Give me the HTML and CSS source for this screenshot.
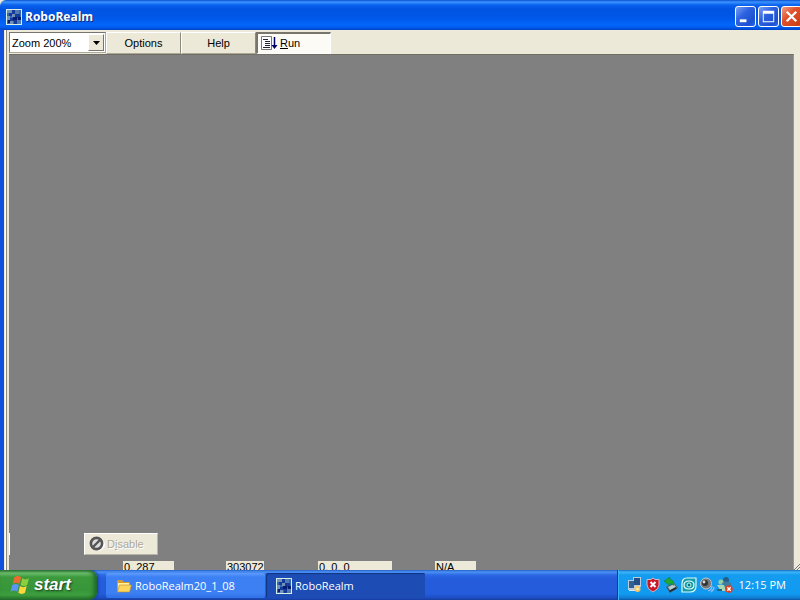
FILE: index.html
```html
<!DOCTYPE html>
<html lang="en">
<head>
<meta charset="utf-8">
<title>RoboRealm</title>
<link rel="stylesheet" href="styles.css">
</head>
<body>
<svg width="0" height="0" class="defs" aria-hidden="true">
  <symbol id="app" viewBox="0 0 16 16">
    <path fill="#d4f0e8" d="M0 0h16v16H0z"/><path fill="#3464b4" d="M1 1h14v14H1z"/>
    <path fill="#7492b4" d="M1 1h5v3H1zM1 7h3v4H1zM6 5h3v3H6zM4 12h3v3H4z"/>
    <path fill="#5478b0" d="M9 1h4v4H9zM11 11h4v4h-4z"/>
    <path fill="#123b9c" d="M6 1h3v4H6zM3 4h3v3H3zM9 5h5v4H9zM4 9h4v3H4zM8 11h3v4H8z"/>
    <path fill="#071c70" d="M7 8h4v3H7zM12 8h3v3h-3zM2 11h2v3H2z"/>
  </symbol>
</svg>
<header class="titlebar">
  <svg class="icon" aria-hidden="true"><use href="#app"/></svg>
  <h1>RoboRealm</h1>
  <div class="controls">
    <button class="ctl" aria-label="Minimize"><svg viewBox="0 0 20 20"><path fill="#fff" d="M4 13h7v3H4z"/></svg></button>
    <button class="ctl" aria-label="Maximize"><svg viewBox="0 0 20 20"><path fill="#fff" fill-rule="evenodd" d="M4 4h12v12H4zM5 7v8h10V7z"/></svg></button>
    <button class="ctl close" aria-label="Close"><svg viewBox="0 0 20 20"><path stroke="#fff" stroke-width="2.4" d="M5 5l10 10M15 5L5 15"/></svg></button>
  </div>
</header>
<main class="window">
  <div class="toolbar">
    <div class="zoom">
      <select aria-label="Zoom"><option>Zoom 200%</option></select>
      <span class="arrow"><svg viewBox="0 0 7 4"><path d="M0 0h7L3.500 4z"/></svg></span>
    </div>
    <button class="tool">Options</button>
    <button class="tool">Help</button>
    <button class="tool run"><svg viewBox="0 0 17 15"><path fill="#fff" stroke="#777" d="M.5.5h10v13H.5z"/><path stroke="#223" d="M2 3.500h5M4 5.500h5M4 7.500h5M4 9.500h5M2 11.500h7"/><path stroke="#006" stroke-width="1.500" d="M13.500 1v9"/><path fill="#006" d="M10.500 9h6l-3 4z"/></svg><span><u>R</u>un</span></button>
  </div>
  <section class="canvas">
    <div class="actions">
      <button class="disable" disabled><svg viewBox="0 0 16 16"><path fill="#fff" d="M9 2a7 7 0 017 7 7 7 0 01-7 6z"/><circle cx="7.500" cy="7.500" r="5.600" fill="#ddd" stroke="#555" stroke-width="2.600"/><path stroke="#555" stroke-width="2.400" d="M4 11l7-7"/></svg><span>D<u>i</u>sable</span></button>
    </div>
    <div class="status">
      <output>0, 287</output><output>303072</output><output>0, 0, 0</output><output>N/A</output>
    </div>
  </section>
  <svg class="grip" viewBox="0 0 6 6" aria-hidden="true"><path stroke="#777" d="M0 6l6-6M3 6l3-3"/></svg>
</main>
<footer class="taskbar">
  <button class="start"><svg viewBox="0 0 18 18"><path fill="#f06a30" d="M4 2q3-2 6 0L8.500 8q-3-2-6 0z"/><path fill="#8bd03c" d="M11 3q3 2 6 0l-1.500 6q-3 2-6 0z"/><path fill="#5c96f4" d="M2 9q3-2 6 0l-1.500 6q-3-2-6 0z"/><path fill="#fcd83c" d="M9 10q3 2 6 0l-1.500 6q-3 2-6 0z"/></svg><span>start</span></button>
  <nav class="tasks">
    <button class="task"><svg class="icon" viewBox="0 0 16 16"><path fill="#d69a28" d="M1 3q0-1 1-1h4l2 2h5q1 0 1 1v9H2q-1 0-1-1z"/><path fill="#fff0a0" d="M2 5h11v8H2z"/><path fill="#fbd55c" stroke="#c88a20" stroke-width=".6" d="M3.500 7H15.500L13.500 14H1.500z"/></svg><span>RoboRealm20_1_08</span></button>
    <button class="task active"><svg class="icon" aria-hidden="true"><use href="#app"/></svg><span>RoboRealm</span></button>
  </nav>
  <div class="tray">
    <svg viewBox="0 0 16 16"><path fill="#b8cce0" d="M6 0h8v10H6zM1 3h7v10H1z"/><path fill="#234f86" d="M7 1h6v7H7z"/><path fill="#36618f" d="M2 4h5v7H2z"/><path fill="#dce4ec" d="M2 13h6v1H2zM8 9h5v1H8z"/><circle cx="10.500" cy="12" r="3" fill="#ffc45c"/><circle cx="10.500" cy="12" r="1.300" fill="#fff2b0"/></svg>
    <svg viewBox="0 0 16 16"><path fill="#c81828" stroke="#d8b8c0" d="M8 1l2 1.500h4V8q0 4-6 7Q2 12 2 8V2.500h4z"/><path stroke="#fff" stroke-width="2" d="M5.500 5l5 5M10.500 5l-5 5"/></svg>
    <svg viewBox="0 0 16 16"><path fill="#445c64" d="M3 10l8-4 4 5-8 5z"/><path fill="#b8ccd0" d="M5 10l6-3 2 3-6 3z"/><path fill="#20282c" d="M6 14l7-4v2l-6 3z"/><path fill="#20a830" stroke="#107828" stroke-width=".5" d="M1 4l6-4v2.500q4 0 4 6-2-2-4-2V9z"/></svg>
    <svg viewBox="0 0 16 16"><path fill="#159ca8" stroke="#d8fcf8" stroke-width="1.200" d="M6 1h9v8q0 6-6 6H1V7q0-6 5-6z"/><path fill="none" stroke="#e8fffc" stroke-width="1.200" d="M3 8q0-4 5-4 5 0 5 4 0 4-5 4-5 0-5-4z"/><circle cx="8" cy="8" r="2" fill="#08747c" stroke="#c8f4f0"/></svg>
    <svg viewBox="0 0 16 16"><circle cx="7" cy="6.500" r="5.500" fill="#75797c" stroke="#c0c4c8"/><circle cx="6" cy="6" r="3" fill="#303438"/><circle cx="5" cy="5" r="1.400" fill="#ddd"/><path fill="none" stroke="#94baff" stroke-width="1.200" d="M9 14q4-1 4-5M12 15q3-2 3-5"/></svg>
    <svg viewBox="0 0 16 16"><circle cx="9" cy="3" r="3" fill="#245f88"/><circle cx="4" cy="5" r="2.600" fill="#94cca4"/><path fill="#407ca0" d="M5 6q4-3 9 0v6H7z"/><path fill="#a8d8b4" d="M0 8h7l2 6H4z"/><path fill="#246488" d="M0 12h5v2H0z"/><circle cx="12" cy="12" r="3.800" fill="#df3e20"/><path stroke="#fff" stroke-width="1.400" d="M10.300 10.300l3.400 3.400M13.700 10.300l-3.400 3.400"/></svg>
    <time>12:15 PM</time>
  </div>
</footer>
</body>
</html>
```
FILE: styles.css
```css
* { box-sizing: border-box; }
body {
  margin: 0;
  min-height: 100vh;
  display: flex;
  flex-direction: column;
  font: 11px/13px "Liberation Sans", Arial, sans-serif;
  color: #000;
  background: #ece9d8;
}
button { font: inherit; color: inherit; padding: 0; border: 0; }
.defs { position: absolute; }
.icon { width: 16px; height: 16px; flex: none; }

.titlebar {
  height: 30px;
  flex: none;
  display: flex;
  align-items: center;
  gap: 3px;
  padding: 3px 0 0 6px;
  overflow: hidden;
  border-radius: 6px 0 0 0;
  background: linear-gradient(#0a50d0 0, #3c94ff 2px, #0a62ee 5px, #0054e0 9px, #0058ea 18px, #0466fc 25px, #0058e8 28px, #0040c0 30px);
}
.titlebar h1 {
  flex: 1;
  margin: 0;
  color: #fff;
  font: bold 12px/16px "Open Sans", "Noto Sans", sans-serif;
  text-shadow: 1px 1px 0 #0a2a80;
}
.controls { display: flex; gap: 2px; margin-right: -2px; }
.ctl {
  width: 21px;
  height: 21px;
  border: 1px solid #fff;
  border-radius: 3px;
  background: linear-gradient(135deg, #7ba0f4, #2c62e0 40%, #1c50d0 80%, #2c6af0);
}
.ctl svg { display: block; width: 100%; height: 100%; }
.close { background: linear-gradient(135deg, #f0a088, #e0512c 40%, #c83c14); }

.window {
  position: relative;
  flex: 1;
  display: flex;
  flex-direction: column;
  padding: 1px 6px 0 4px;
  border-left: 4px solid #1050dc;
  background: linear-gradient(90deg, #ece9d8 1px, #fff 1px 2px, #8c8a80 2px 3px, #ece9d8 3px);
}
.toolbar { height: 23px; display: flex; align-items: flex-start; padding-top: 1px; }
.zoom {
  position: relative;
  width: 97px;
  height: 21px;
  border: 1px solid;
  border-color: #77756c #aca899 #aca899 #77756c;
  margin-left: 1px;
}
.zoom select {
  display: block;
  width: 100%;
  height: 100%;
  appearance: none;
  border: 0;
  border-radius: 0;
  padding: 0 2px;
  background: #fff;
  color: #000;
  font: 11px/18px "Liberation Sans", Arial, sans-serif;
}
.arrow {
  position: absolute;
  top: 1px;
  right: 1px;
  bottom: 1px;
  width: 16px;
  display: grid;
  place-items: center;
  background: #ece9d8;
  border: 1px solid;
  border-color: #fff #77756c #77756c #fff;
  pointer-events: none;
}
.arrow svg { width: 7px; height: 4px; }
.tool {
  width: 75px;
  height: 22px;
  background: #ece9d8;
  border: 1px solid;
  border-color: #fff #8c8a80 #aca899 #fff;
}
.run {
  display: flex;
  align-items: center;
  gap: 2px;
  padding-left: 3px;
  background: #fcfbf6;
  border-width: 2px 1px 1px 2px;
  border-color: #77756c #fff #fff #77756c;
}
.run svg { width: 17px; height: 15px; }

.canvas {
  flex: 1;
  display: flex;
  flex-direction: column;
  justify-content: flex-end;
  gap: 6px;
  margin-left: 1px;
  border-top: 1px solid #716f64;
  border-right: 1px solid #9a9890;
  background: #808080;
}
.actions { display: flex; padding-left: 74px; border-left: 1px solid #fff; }
.disable {
  width: 74px;
  height: 22px;
  display: flex;
  align-items: center;
  gap: 2px;
  padding-left: 4px;
  color: #aca899;
  background: #ece9d8;
  border: 1px solid;
  border-color: #fff #b8b5a8 #b8b5a8 #fff;
  text-shadow: 1px 1px 0 #fff;
}
.disable svg { width: 16px; height: 16px; }
.status {
  height: 9px;
  overflow: hidden;
  display: grid;
  grid-template-columns: 103px 92px 117px 41px;
  padding-left: 114px;
}
.status output { height: 13px; background: #ece9d8; padding-left: 1px; white-space: nowrap; }
.status output:nth-child(1) { margin-right: 52px; }
.status output:nth-child(2) { margin-right: 54px; }
.status output:nth-child(3) { margin-right: 43px; }
.grip { position: absolute; right: 0; bottom: 0; width: 6px; height: 6px; }

.taskbar {
  height: 30px;
  flex: none;
  display: flex;
  overflow: hidden;
  color: #fff;
  background: linear-gradient(#2460c8 0, #4c92f4 2px, #2c68e4 5px, #245cdc 9px, #245cdc 24px, #1c4cc0 28px, #183c9c 30px);
}
.start {
  width: 97px;
  display: flex;
  align-items: center;
  gap: 4px;
  padding-left: 10px;
  border-radius: 0 8px 8px 0;
  background: linear-gradient(#307c34 0, #70c070 3px, #3c9a3c 7px, #38963a 20px, #3c9e3e 25px, #24702a 30px);
  box-shadow: inset -3px 0 4px #20642c, 1px 0 3px #143c90;
}
.start svg { width: 20px; height: 20px; }
.start span { font: italic bold 17px/20px "Liberation Sans", Arial, sans-serif; text-shadow: 1px 1px 2px #183c18; }
.tasks { flex: 1; display: flex; gap: 1px; padding: 3px 0 2px 9px; }
.task {
  width: 159px;
  display: flex;
  align-items: center;
  gap: 3px;
  padding-left: 10px;
  border-radius: 2px;
  color: #fff;
  background: linear-gradient(#609cfc 0, #3c80f4 4px, #3c80f4 20px, #3070e4);
  font: 11px/14px "Open Sans", "Noto Sans", sans-serif;
}
.active { background: #1c4cb4; box-shadow: inset 1px 1px 1px #123680; }
.tray {
  width: 183px;
  display: flex;
  align-items: center;
  gap: 2px;
  padding: 0 14px 0 9px;
  border-left: 1px solid #0c3c94;
  box-shadow: inset 1px 0 0 #38b8f8;
  background: linear-gradient(#0c6cc0 0, #40b4f8 2px, #149cf0 5px, #109af0 24px, #107cd0 28px, #0c58a8 30px);
}
.tray svg { width: 16px; height: 16px; flex: none; }
.tray time { margin-left: auto; white-space: nowrap; font: 11px/14px "Open Sans", "Noto Sans", sans-serif; }
```
